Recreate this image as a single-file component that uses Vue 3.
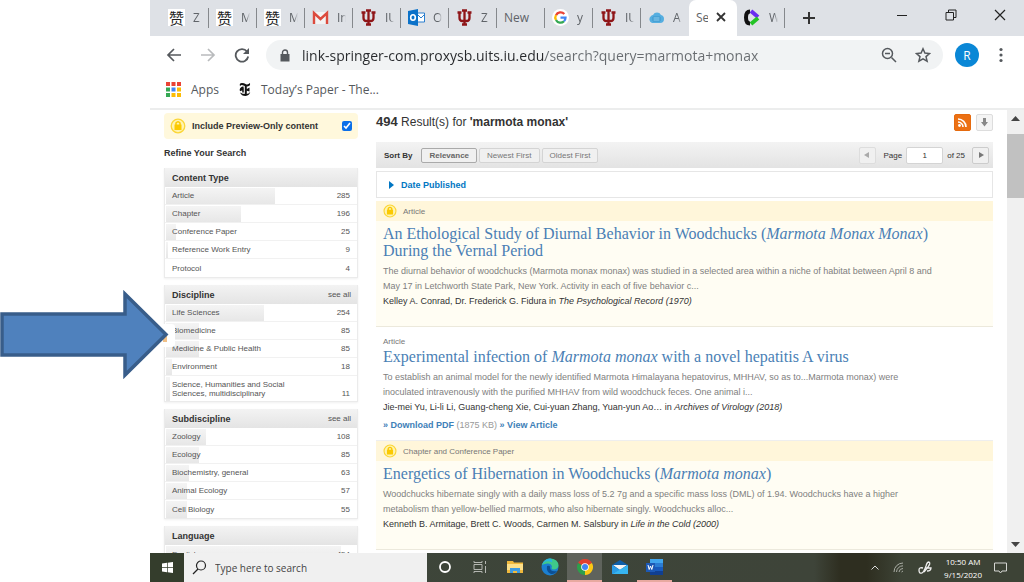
<script setup>
import { ref } from 'vue'

const tabs = [
  { icon: 'zan', label: 'Z' },
  { icon: 'zan', label: 'M' },
  { icon: 'zan', label: 'M' },
  { icon: 'gmail', label: 'In' },
  { icon: 'iu', label: 'IU' },
  { icon: 'outlook', label: 'O' },
  { icon: 'iu', label: 'Z' },
  { icon: '', label: 'New' },
  { icon: 'google', label: 'y' },
  { icon: 'iu', label: 'IU' },
  { icon: 'cloud', label: 'A' },
  { icon: '', label: 'Se', active: true },
  { icon: 'ring', label: 'W' }
]

const url = ref('link-springer-com.proxysb.uits.iu.edu/search?query=marmota+monax')
const search = ref('')
const page = ref('1')
const previewOnly = ref(true)

const facets = [
  {
    title: 'Content Type',
    rows: [
      { name: 'Article', count: 285, bar: 57 },
      { name: 'Chapter', count: 196, bar: 39 },
      { name: 'Conference Paper', count: 25, bar: 5 },
      { name: 'Reference Work Entry', count: 9, bar: 1 },
      { name: 'Protocol', count: 4, bar: 0 }
    ]
  },
  {
    title: 'Discipline',
    all: true,
    rows: [
      { name: 'Life Sciences', count: 254, bar: 51 },
      { name: 'Biomedicine', count: 85, bar: 17 },
      { name: 'Medicine & Public Health', count: 85, bar: 17 },
      { name: 'Environment', count: 18, bar: 3 },
      { name: 'Science, Humanities and Social Sciences, multidisciplinary', count: 11, bar: 2, tall: true }
    ]
  },
  {
    title: 'Subdiscipline',
    all: true,
    rows: [
      { name: 'Zoology', count: 108, bar: 21 },
      { name: 'Ecology', count: 85, bar: 17 },
      { name: 'Biochemistry, general', count: 63, bar: 12 },
      { name: 'Animal Ecology', count: 57, bar: 11 },
      { name: 'Cell Biology', count: 55, bar: 11 }
    ]
  },
  {
    title: 'Language',
    rows: [{ name: 'English', count: 454, bar: 91 }]
  }
]

const results = [
  {
    locked: true,
    type: 'Article',
    title: [['An Ethological Study of Diurnal Behavior in Woodchucks ('], ['Marmota Monax Monax', 1], [')'], ['br'], ['During the Vernal Period']],
    snippet: [
      'The diurnal behavior of woodchucks (Marmota monax monax) was studied in a selected area within a niche of habitat between April 8 and',
      'May 17 in Letchworth State Park, New York. Activity in each of five behavior c...'
    ],
    authors: 'Kelley A. Conrad, Dr. Frederick G. Fidura',
    source: 'The Psychological Record (1970)'
  },
  {
    locked: false,
    type: 'Article',
    title: [['Experimental infection of '], ['Marmota monax', 1], [' with a novel hepatitis A virus']],
    snippet: [
      'To establish an animal model for the newly identified Marmota Himalayana hepatovirus, MHHAV, so as to...Marmota monax) were',
      'inoculated intravenously with the purified MHHAV from wild woodchuck feces. One animal i...'
    ],
    authors: 'Jie-mei Yu, Li-li Li, Guang-cheng Xie, Cui-yuan Zhang, Yuan-yun Ao…',
    source: 'Archives of Virology (2018)',
    links: true
  },
  {
    locked: true,
    type: 'Chapter and Conference Paper',
    title: [['Energetics of Hibernation in Woodchucks ('], ['Marmota monax', 1], [')']],
    snippet: [
      'Woodchucks hibernate singly with a daily mass loss of 5.2 7g and a specific mass loss (DML) of 1.94. Woodchucks have a higher',
      'metabolism than yellow-bellied marmots, who also hibernate singly. Woodchucks alloc...'
    ],
    authors: 'Kenneth B. Armitage, Brett C. Woods, Carmen M. Salsbury',
    source: 'Life in the Cold (2000)'
  }
]

const dots = ['#ea4335', '#ea4335', '#ea4335', '#34a853', '#4285f4', '#fbbc05', '#34a853', '#fbbc05', '#fbbc05']
</script>

<template>
  <div class="slide">
    <div class="browser">
      <div class="tabs">
        <button v-for="(t, i) in tabs" :key="i" class="tab" :class="{ active: t.active, before: i === 10 }" type="button">
          <span v-if="t.icon === 'zan'" class="fav zan">赞</span>
          <svg v-else-if="t.icon === 'gmail'" class="fav" viewBox="0 0 17 17"><path d="M1 3h15v12H1z" fill="#f3f3f3" /><path d="M2 15V4l6.500 6L15 4v11" fill="none" stroke="#dc4a3d" stroke-width="2.400" /></svg>
          <svg v-else-if="t.icon === 'iu'" class="fav" viewBox="0 0 17 17"><path d="M6 1.500h5M8.500 1v15M6 15.500h5M3.500 3v6q0 3 3 3h4q3 0 3-3V3M1.500 3.500h4M11.500 3.500h4" fill="none" stroke="#8f1518" stroke-width="2.300" /></svg>
          <svg v-else-if="t.icon === 'outlook'" class="fav" viewBox="0 0 17 17"><path d="M9 4h7.500v9H9z" fill="#fff" stroke="#2b7fce" /><path d="M9 5l4 4 4-4" fill="none" stroke="#2b7fce" /><path d="M0 2l10-2v17L0 15z" fill="#0b72c9" /><ellipse cx="5" cy="8.500" rx="2.300" ry="2.800" fill="none" stroke="#fff" stroke-width="1.600" /></svg>
          <svg v-else-if="t.icon === 'google'" class="fav" viewBox="0 0 17 17"><circle cx="8.500" cy="8.500" r="8.500" fill="#fff" /><g fill="none" stroke-width="2.300"><path d="M4 6.200A5 5 0 0 1 12.300 5" stroke="#ea4335" /><path d="M4 6A5 5 0 0 0 4 11" stroke="#fbbc05" /><path d="M4 11A5 5 0 0 0 12 12.200" stroke="#34a853" /><path d="M8.500 8.700h5A5 5 0 0 1 12 12.200" stroke="#4285f4" /></g></svg>
          <svg v-else-if="t.icon === 'cloud'" class="fav" viewBox="0 0 17 17"><path d="M4 14a4 4 0 0 1-1-7q1-1 2-1a4.500 4.500 0 0 1 8 0 4 4 0 0 1 3 4q0 4-4 4z" fill="#55aee0" /><path d="M5 8h7v4H5zM5 10h7" fill="#8fd0f2" stroke="#348fc7" stroke-width="0.800" /></svg>
          <svg v-else-if="t.icon === 'ring'" class="fav" viewBox="0 0 17 17"><g fill="none" stroke-width="4"><path d="M6 2.500q-4 0-4 6t4 6" stroke="#111" /><path d="M7 2l7 6" stroke="#6a2df0" /><path d="M14 9l-7 6" stroke="#23c326" /></g></svg>
          <span class="tab-text" :class="{ fade: t.icon }">{{ t.label }}</span>
          <svg v-if="t.active" class="tab-x" viewBox="0 0 10 10"><path d="M1 1l8 8M9 1l-8 8" stroke="#333" stroke-width="1.800" /></svg>
        </button>
        <button class="plus" type="button" aria-label="New tab"><svg width="14" height="14" viewBox="0 0 14 14"><path d="M7 1v12M1 7h12" stroke="#333" stroke-width="2" /></svg></button>
        <div class="win">
          <button type="button" aria-label="Minimize"><svg width="12" height="12" viewBox="0 0 12 12"><path d="M1 6.500h10" stroke="#222" /></svg></button>
          <button type="button" aria-label="Restore"><svg width="12" height="12" viewBox="0 0 12 12"><path d="M1 3.500h7.500V11H1zM3.500 3V1H11v7.500H9" fill="none" stroke="#222" /></svg></button>
          <button type="button" aria-label="Close"><svg width="12" height="12" viewBox="0 0 12 12"><path d="M1 1l10 10M11 1L1 11" stroke="#222" stroke-width="1.200" /></svg></button>
        </div>
      </div>

      <div class="toolbar">
        <button class="nav" type="button" aria-label="Back"><svg width="16" height="16" viewBox="0 0 16 16"><path d="M15 8H2M8 2L2 8l6 6" fill="none" stroke="#55595d" stroke-width="1.700" /></svg></button>
        <button class="nav" type="button" aria-label="Forward"><svg width="16" height="16" viewBox="0 0 16 16"><path d="M1 8h13M8 2l6 6-6 6" fill="none" stroke="#b9bbbd" stroke-width="1.700" /></svg></button>
        <button class="nav" type="button" aria-label="Reload"><svg width="16" height="16" viewBox="0 0 16 16"><path d="M13 4.500A6.300 6.300 0 1 0 14.200 9.500" fill="none" stroke="#55595d" stroke-width="1.800" /><path d="M15 1v6H9z" fill="#55595d" /></svg></button>
        <div class="omni">
          <svg width="10" height="13" viewBox="0 0 10 13"><path d="M0.500 5h9v7.500h-9z" fill="#55595d" /><path d="M2.500 5V3.500a2.500 2.500 0 0 1 5 0V5" fill="none" stroke="#55595d" stroke-width="1.400" /></svg>
          <input v-model="url" class="url" aria-label="Address" spellcheck="false" />
          <button type="button" aria-label="Zoom"><svg width="16" height="16" viewBox="0 0 16 16"><circle cx="6.500" cy="6.500" r="5" fill="none" stroke="#55595d" stroke-width="1.500" /><path d="M4 6.500h5M10.500 10.500L15 15" stroke="#55595d" stroke-width="1.500" /></svg></button>
          <button type="button" aria-label="Bookmark"><svg width="16" height="16" viewBox="0 0 16 16"><path d="M8 1.800l1.900 4.300 4.600.4-3.500 3.100 1.100 4.600L8 11.800l-4.100 2.400L5 9.600 1.500 6.500l4.600-.4z" fill="none" stroke="#55595d" stroke-width="1.500" /></svg></button>
        </div>
        <button class="avatar" type="button">R</button>
        <button class="more" type="button" aria-label="Menu"><svg width="4" height="16" viewBox="0 0 4 16"><circle cx="2" cy="2.500" r="1.600" fill="#55595d" /><circle cx="2" cy="8" r="1.600" fill="#55595d" /><circle cx="2" cy="13.500" r="1.600" fill="#55595d" /></svg></button>
      </div>

      <div class="bookmarks">
        <a href="#"><svg width="15" height="15" viewBox="0 0 15 15"><rect v-for="(c, i) in dots" :key="i" :x="(i % 3) * 5.500" :y="Math.floor(i / 3) * 5.500" width="4" height="4" :fill="c" /></svg>Apps</a>
        <a href="#"><svg width="12" height="15" viewBox="0 0 12 15"><path d="M1 4.200Q0 1 3 1q2 0 4 1.200 2 .8 4-1.200.6 3.200-2.500 3.400Q6.500 4.400 4.500 3.400 2 2.500 1 4.200z" fill="#111" /><path d="M6.800 4v8" stroke="#111" stroke-width="2" /><path d="M4.500 5Q1 6 1.500 8.500M1 8.500l3-1.500v3.500" fill="none" stroke="#111" stroke-width="1.500" /><path d="M1 10.500q1.500 3.500 5.500 3.500 4-.4 4.700-4-1.700 2.200-4.200 2-3.500 0-6-1.500zM7 7.500l3.500-2v4l-3.500-1z" fill="#111" /></svg>Today’s Paper - The...</a>
      </div>

      <div class="view">
        <div class="site">
          <aside class="side">
            <label class="preview">
              <svg width="16" height="16" viewBox="0 0 16 16"><circle cx="8" cy="8" r="6.800" fill="#fff3b0" stroke="#fbd636" stroke-width="1.300" /><path d="M4.500 6.500h7V12h-7z" fill="#fbc900" /><path d="M6 7V5q2-2.500 4 0v2" fill="none" stroke="#fbc900" stroke-width="1.500" /></svg>
              <span>Include Preview-Only content</span>
              <input v-model="previewOnly" type="checkbox" />
            </label>
            <h2>Refine Your Search</h2>
            <section v-for="f in facets" :key="f.title" class="facet">
              <h3>{{ f.title }}<a v-if="f.all" href="#">see all</a></h3>
              <a v-for="r in f.rows" :key="r.name" href="#" class="row" :class="{ tall: r.tall }">
                <i class="bar" :style="{ width: r.bar + '%' }"></i>
                <span class="name">{{ r.name }}</span><span class="count">{{ r.count }}</span>
              </a>
            </section>
          </aside>

          <main class="main">
            <header class="head">
              <h1><b class="num">494</b> Result(s) for <b>'marmota monax'</b></h1>
              <a class="sq rss" href="#" aria-label="RSS"><svg width="11" height="11" viewBox="0 0 11 11"><circle cx="2.500" cy="8.500" r="1.400" fill="#fff" /><path d="M1 5a5 5 0 0 1 5 5M1 2a8 8 0 0 1 8 8" fill="none" stroke="#fff" stroke-width="1.600" /></svg></a>
              <a class="sq" href="#" aria-label="Download"><svg width="9" height="10" viewBox="0 0 9 10"><path d="M3 1h3v4h2L4.500 9.500 1 5h2z" fill="#888" /></svg></a>
            </header>
            <div class="sort">
              <b>Sort By</b>
              <button type="button" class="on">Relevance</button>
              <button type="button">Newest First</button>
              <button type="button">Oldest First</button>
              <div class="pager">
                <button type="button" class="pg dim" aria-label="Previous"><svg width="6" height="6" viewBox="0 0 6 6"><path d="M5 0v6L0 3z" fill="#aaa" /></svg></button>
                <label for="pg">Page</label>
                <input id="pg" v-model="page" />
                <span>of 25</span>
                <button type="button" class="pg" aria-label="Next"><svg width="6" height="6" viewBox="0 0 6 6"><path d="M1 0v6l5-3z" fill="#777" /></svg></button>
              </div>
            </div>
            <button type="button" class="date"><svg width="5" height="8" viewBox="0 0 5 8"><path d="M0 0v8l5-4z" fill="#0176c3" /></svg>Date Published</button>

            <article v-for="(r, i) in results" :key="i" class="result" :class="{ locked: r.locked }">
              <div class="type">
                <svg v-if="r.locked" width="14" height="14" viewBox="0 0 16 16"><circle cx="8" cy="8" r="6.800" fill="#fff3b0" stroke="#fbd636" stroke-width="1.300" /><path d="M4.500 6.500h7V12h-7z" fill="#fbc900" /><path d="M6 7V5q2-2.500 4 0v2" fill="none" stroke="#fbc900" stroke-width="1.500" /></svg>{{ r.type }}
              </div>
              <h2><a href="#"><template v-for="(p, k) in r.title" :key="k"><br v-if="p[0] === 'br'" /><em v-else-if="p[1]">{{ p[0] }}</em><template v-else>{{ p[0] }}</template></template></a></h2>
              <p class="snip">{{ r.snippet[0] }}<br />{{ r.snippet[1] }}</p>
              <p class="auth">{{ r.authors }} in <em>{{ r.source }}</em></p>
              <p v-if="r.links" class="links"><a href="#">» Download PDF</a> (1875 KB) <a href="#">» View Article</a></p>
            </article>
          </main>
        </div>
        <div class="scroll">
          <svg width="9" height="5" viewBox="0 0 9 5"><path d="M0 5h9L4.500 0z" fill="#444" /></svg>
          <div class="thumb"></div>
          <svg class="down" width="9" height="5" viewBox="0 0 9 5"><path d="M0 0h9L4.500 5z" fill="#444" /></svg>
        </div>
      </div>

      <footer class="task">
        <button class="start" type="button" aria-label="Start"><svg width="11" height="11" viewBox="0 0 11 11"><path d="M0 1.500l5-.7v4.400H0zM5.700.7L11 0v5.200H5.700zM0 5.900h5v4.400l-5-.7zM5.700 5.900H11V11l-5.300-.7z" fill="#fff" /></svg></button>
        <label class="find">
          <svg width="15" height="15" viewBox="0 0 15 15"><circle cx="9" cy="5.500" r="4.500" fill="none" stroke="#222" stroke-width="1.200" /><path d="M6 9l-5 5" stroke="#222" stroke-width="1.300" /></svg>
          <input v-model="search" placeholder="Type here to search" aria-label="Search" />
        </label>
        <div class="apps">
          <button type="button" aria-label="Cortana"><svg width="14" height="14" viewBox="0 0 14 14"><circle cx="7" cy="7" r="5" fill="none" stroke="#fff" stroke-width="1.800" /></svg></button>
          <button type="button" aria-label="Task view"><svg width="14" height="14" viewBox="0 0 14 14"><path d="M1 4.500h8v5H1zM1 1v1.500h8V1M1 13v-1.500h8V13M12.500 1v3M12.500 6v7" fill="none" stroke="#b4b6b1" /></svg></button>
          <button type="button" aria-label="Files"><svg width="16" height="14" viewBox="0 0 16 14"><path d="M0 1h6l1 1.500h9V13H0z" fill="#f0b93d" /><path d="M0 4h16v6H0z" fill="#fde08a" /><path d="M3 13V8h10v5h-3v-2H6v2z" fill="#3f9be0" /></svg></button>
          <button type="button" aria-label="Edge"><svg width="18" height="18" viewBox="0 0 18 18"><circle cx="9" cy="9" r="8.500" fill="#1b7fd1" /><path d="M1 7Q3 .5 9.500.5 17 1 17.500 7.500q-.5 4-5 4-3-.5-1.500-3-1-3.500-5-3T1 7z" fill="#3fc98a" /><path d="M1 7q2-6 8-6.500 3 1 2 4-3-2-6-1T1 7z" fill="#29b5dc" /><path d="M6 8q-1 6 4 8 4 .5 6-3-7 1.500-7-4 0-2-3-1z" fill="#0d4f93" /></svg></button>
          <button type="button" aria-label="Chrome" class="cur"><svg width="16" height="16" viewBox="0 0 16 16"><path d="M8 8L1.070 4A8 8 0 0 1 14.930 4z" fill="#e2402f" /><path d="M8 8L14.930 4A8 8 0 0 1 8 16z" fill="#fbc815" /><path d="M8 8L8 16A8 8 0 0 1 1.070 4z" fill="#2d9f4c" /><circle cx="8" cy="8" r="3.800" fill="#fff" /><circle cx="8" cy="8" r="3" fill="#4285f4" /></svg></button>
          <button type="button" aria-label="Mail"><svg width="18" height="16" viewBox="0 0 18 16"><path d="M1 6l8-5 8 5v9H1z" fill="#0f5ea8" /><path d="M2 6h14l-7 5z" fill="#f4f4f4" /><path d="M1 6l8 5-8 4z" fill="#2a9be6" /><path d="M17 6v9H1z" fill="#37b5f1" /></svg></button>
          <button type="button" aria-label="Word" class="open"><svg width="17" height="16" viewBox="0 0 17 16"><path d="M4 0h13v4H4z" fill="#41a5ee" /><path d="M4 4h13v4H4z" fill="#2b7cd3" /><path d="M4 8h13v4H4z" fill="#185abd" /><path d="M4 12h13v4H4z" fill="#103f91" /><path d="M0 4h9v9H0z" fill="#1d59b5" /><path d="M2 6l1.200 4.500L4.500 7l1.300 3.500L7 6" fill="none" stroke="#fff" /></svg></button>
        </div>
        <div class="tray">
          <svg width="8" height="5" viewBox="0 0 8 5"><path d="M.5 4.500L4 1l3.500 3.500" fill="none" stroke="#ddd" /></svg>
          <svg width="11" height="11" viewBox="0 0 11 11"><path d="M1 10A9 9 0 0 1 10 1M3.500 10A6.500 6.500 0 0 1 10 3.800M6 10a4 4 0 0 1 4-3.500M8.500 10L10 9" fill="none" stroke="#aaada5" /></svg>
          <svg width="14" height="14" viewBox="0 0 14 14"><path d="M5 7q-4-1-4 2 0 4 3 3 2-1 4-7 1-4 3-4 2 1-1 5l-4 5M8 7h5q0 3-4 3" fill="none" stroke="#eee" stroke-width="1.300" /></svg>
          <div class="clock"><span>10:50 AM</span><span>9/15/2020</span></div>
          <svg width="13" height="12" viewBox="0 0 13 12"><path d="M.5 1h12v8H8l-1.500 2L5 9H.5z" fill="none" stroke="#d5d6d2" /></svg>
        </div>
      </footer>
    </div>

    <div class="chip"></div>
    <svg class="arrow" width="170" height="90" viewBox="0 0 170 90" aria-hidden="true"><path d="M2 24H125V4L166 44.500 125 85V65H2z" fill="#4f81bd" stroke="#385d8a" stroke-width="3.500" /></svg>
  </div>
</template>

<style>
html, body { background: #fff; }
</style>

<style scoped>
* { box-sizing: border-box; }
.slide { position: relative; height: 100vh; padding-left: 150px; overflow: hidden; font-family: "Liberation Sans", Arial, sans-serif; color: #333; }
button, input { font: inherit; color: inherit; border: 0; background: none; padding: 0; margin: 0; outline: 0; }
a { color: inherit; text-decoration: none; }
h1, h2, h3, p { margin: 0; }
svg { flex: none; display: block; }
.browser { height: 100%; display: flex; flex-direction: column; }

.tabs { flex: none; height: 36px; background: #dee1e6; display: flex; padding-left: 11px; font: 12px "Open Sans", "Noto Sans", sans-serif; color: #5f6368; }
.tab { width: 48px; flex: none; display: flex; align-items: center; gap: 8px; padding: 0 4px 2px 7px; position: relative; text-align: left; }
.tab::after { content: ""; position: absolute; right: 0; top: 8px; width: 1px; height: 20px; background: #85888c; }
.tab.active { background: #fff; border-radius: 7px 7px 0 0; }
.tab.active::after, .tab.before::after { display: none; }
.fav { width: 17px; height: 17px; flex: none; }
.zan { background: #fff; color: #222; font: 15px/17px "Noto Sans CJK SC", sans-serif; text-align: center; }
.tab-text { flex: 1; min-width: 0; overflow: hidden; white-space: nowrap; }
.fade { -webkit-mask-image: linear-gradient(90deg, #000 5px, transparent 9px); mask-image: linear-gradient(90deg, #000 5px, transparent 9px); }
.tab-x { width: 10px; height: 10px; margin-right: 7px; }
.plus { margin-left: 17px; padding-bottom: 1px; }
.win { margin-left: auto; display: flex; padding-bottom: 6px; }
.win button { width: 49px; display: grid; place-items: center; }

.toolbar { flex: none; height: 39px; display: flex; align-items: center; padding: 0 21px 1px 16px; }
.nav { width: 16px; margin-right: 18px; }
.omni { flex: 1; height: 30px; margin-left: -2px; border-radius: 15px; background: #f1f3f4; display: flex; align-items: center; padding: 0 12px 0 14px; gap: 18px; }
.url { flex: 1; min-width: 0; margin-left: -6px; font: 14px "Open Sans", "Noto Sans", sans-serif; color: transparent; background: linear-gradient(90deg, #27292c 243px, #686c70 243px); -webkit-background-clip: text; background-clip: text; }
.avatar { width: 24px; height: 24px; border-radius: 50%; background: #0a87d6; color: #fff; font: 12px "Open Sans", sans-serif; margin: 0 20px 0 12px; }

.bookmarks { flex: none; height: 35px; border-bottom: 2px solid #eceded; display: flex; gap: 20px; padding: 0 16px 5px; align-items: center; font: 12px "Open Sans", "Noto Sans", sans-serif; color: #55595d; }
.bookmarks a { display: flex; align-items: center; gap: 10px; }

.view { flex: 1; min-height: 0; display: flex; overflow: hidden; }
.site { flex: 1; min-width: 0; display: flex; gap: 18px; padding: 3px 14px 0; }
.side { width: 194px; flex: none; font-size: 8px; }
.preview { height: 26px; border-radius: 4px; background: #fff8dc; display: flex; align-items: center; gap: 6px; padding: 0 6px; font-size: 9px; font-weight: bold; }
.preview span { flex: 1; }
.preview input { width: 10px; height: 10px; accent-color: #0b6fe8; }
.side h2 { font-size: 9px; line-height: 29px; height: 29px; }
.facet { border: 1px solid #ebebeb; border-top: 0; margin-bottom: 7px; box-shadow: 0 1px 2px #f0f0f0; }
.facet h3 { height: 19px; padding: 0 6px 0 7px; background: linear-gradient(#f3f3f3, #e4e4e4); display: flex; justify-content: space-between; align-items: center; font-size: 9px; }
.facet h3 a { font-size: 8px; font-weight: normal; color: #555; }
.row { height: 18px; display: flex; align-items: center; position: relative; padding: 0 7px; border-bottom: 1px solid #f1f1f1; color: #555; }
.row:last-child { border-bottom: 0; }
.row.tall { height: 25px; line-height: 9px; align-items: flex-end; padding-bottom: 3px; }
.bar { position: absolute; left: 1px; top: 1px; bottom: 0; background: linear-gradient(#f4f4f4, #e7e7e7); }
.name { position: relative; flex: 1; padding-right: 40px; white-space: nowrap; }
.tall .name { white-space: normal; }
.count { position: relative; }

.main { flex: 1; min-width: 0; }
.head { height: 29px; display: flex; align-items: center; gap: 5px; padding-bottom: 11px; }
h1 { flex: 1; font-size: 12px; line-height: 14px; font-weight: normal; }
.num { font-size: 13px; }
.sq { width: 17px; height: 17px; border: 1px solid #ddd; border-radius: 2px; background: #f4f4f4; display: grid; place-items: center; }
.rss { background: #ec7013; border-color: #e56a0e; }
.sort { height: 26px; background: linear-gradient(#f3f3f3, #e3e3e3); display: flex; align-items: center; gap: 2px; padding: 0 4px 0 8px; font-size: 8px; }
.sort > b { margin-right: 7px; }
.sort > button { height: 15px; padding: 0 7px; border: 1px solid #d4d4d4; border-radius: 2px; color: #777; background: #f0f0f0; }
.sort > .on { border-color: #aaa; font-weight: bold; color: #666; }
.pager { margin-left: auto; display: flex; align-items: center; gap: 4px; }
.pager input { width: 37px; height: 17px; border: 1px solid #d4d4d4; background: #fff; text-align: center; border-radius: 2px; }
.pager label { margin-left: 4px; }
.pg { width: 17px; height: 17px; border: 1px solid #ccc; border-radius: 2px; background: #f0f0f0; display: grid; place-items: center; margin-left: 3px; }
.dim { border-color: #ddd; }
.date { width: 100%; height: 27px; margin: 3px 0; border: 1px solid #e6e6e6; display: flex; align-items: center; gap: 7px; padding-left: 12px; font-size: 9px; font-weight: bold; color: #0176c3; }
.result { border-bottom: 1px solid #eee; padding: 0 7px 7px; }
.locked { background: #fffdf3; border-color: #ece9dc; padding-bottom: 17px; }
.type { height: 20px; margin: 0 -7px; padding: 0 7px; display: flex; align-items: center; gap: 6px; font-size: 8px; color: #777; }
.locked .type { background: #fff6da; }
.result:not(.locked) .type { height: 14px; margin-top: 7px; }
.result h2 { font: 16px/17px "Liberation Serif", Georgia, serif; color: #4a7fb5; padding: 4px 0 5px; }
.result:not(.locked) h2 { padding-top: 0; }
.snip, .auth { font-size: 9px; line-height: 15px; color: #808080; white-space: nowrap; }
.auth { color: #333; }
.links { font-size: 9px; line-height: 15px; margin-top: 3px; color: #999; }
.links a { font-weight: bold; color: #4080b8; }

.scroll { width: 17px; flex: none; background: #f0f0f0; display: flex; flex-direction: column; align-items: center; padding: 6px 0; }
.thumb { width: 100%; height: 64px; background: #c1c1c1; margin-top: 13px; }
.down { margin-top: auto; }

.task { flex: none; height: 29px; background: linear-gradient(90deg, #3d463a 0, #3e4439 76%, #2e2e20 79%, #2e2e20 82%, #3d4336 86%); display: flex; align-items: stretch; font-family: "Open Sans", "Noto Sans", sans-serif; }
.start { width: 34px; display: grid; place-items: center; background: #343d2c; }
.find { width: 243px; background: #f0f0f0; display: flex; align-items: center; gap: 8px; padding-left: 8px; font-size: 10px; }
.find input { flex: 1; min-width: 0; }
.find input::placeholder { color: #444; opacity: 1; }
.apps { display: flex; }
.apps button { width: 35px; display: grid; place-items: center; border-bottom: 2px solid transparent; }
.apps .cur { background: #5f635c; border-color: #e8a9a0; }
.apps .open { border-color: #e8a9a0; }
.tray { margin-left: auto; display: flex; align-items: center; gap: 14px; padding-right: 17px; color: #fff; font-size: 8px; }
.clock { display: flex; flex-direction: column; align-items: center; line-height: 13px; margin: 0 -2px; }

.chip { position: absolute; left: 150px; top: 324px; width: 25px; height: 23px; border-radius: 3px; background: linear-gradient(#f0c088, #f0c088) 13px 12px / 4px 6px no-repeat #fff; }
.arrow { position: absolute; left: 0; top: 290px; }
</style>
